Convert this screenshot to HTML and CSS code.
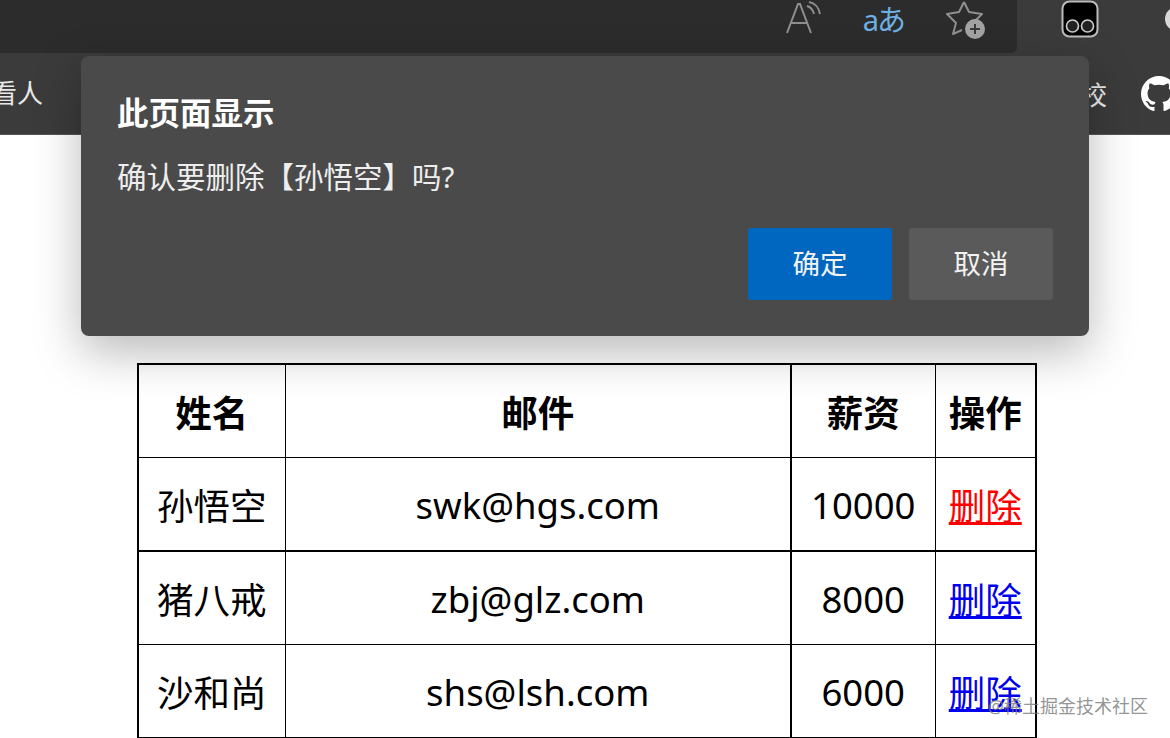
FILE: index.html
```html
<!DOCTYPE html>
<html>
<head>
<title>确认删除</title>
<link rel="stylesheet" href="styles.css">
</head>
<body>

  <div class="browser-top">
    <div class="address-bar">
      <svg class="icon" width="40" height="40" viewBox="0 0 40 40" fill="none" stroke="#8f8f8f" stroke-width="2">
        <path d="M4 33 L15 4 L17 4 L28 33 M8 23 H24"/>
        <path d="M24 6 C28 7 30 10 31 14 M26 2 C32 3 36 8 37 14"/>
      </svg>
      <span class="translate-icon">aあ</span>
      <svg class="icon" width="42" height="42" viewBox="0 0 42 42" fill="none">
        <path d="M20 3 L25 13 L38 15 L30 23 M20 3 L15 13 L3 15 L12 24 L9 35 L18 31" stroke="#8f8f8f" stroke-width="2" stroke-linejoin="round"/>
        <circle cx="31" cy="30" r="10" fill="#a3a3a3"/>
        <path d="M26 30 H36 M31 25 V35" stroke="#3a3a3a" stroke-width="2"/>
      </svg>
    </div>
    <div class="extensions">
      <svg class="icon" width="38" height="38" viewBox="0 0 38 38">
        <rect x="1.5" y="1.5" width="35" height="35" rx="7" fill="#000" stroke="#bdbdbd" stroke-width="2"/>
        <circle cx="11.5" cy="26" r="6" fill="#222" stroke="#d0d0d0" stroke-width="1.6"/>
        <circle cx="26.5" cy="26" r="6" fill="#222" stroke="#d0d0d0" stroke-width="1.6"/>
      </svg>
      <svg class="icon" width="30" height="36" viewBox="0 0 30 36" fill="#d8d8d8">
        <circle cx="18" cy="18" r="12"/>
        <rect x="14" y="2" width="8" height="32" rx="3"/>
        <circle cx="18" cy="18" r="5" fill="#3b3b3b"/>
      </svg>
    </div>
  </div>

  <div class="bookmarks">
    <span class="bookmark-left">看人</span>
    <span class="bookmark-right">校</span>
    <svg class="icon" width="36" height="36" viewBox="0 0 16 16" fill="#fff">
      <path d="M8 0C3.58 0 0 3.58 0 8c0 3.54 2.29 6.53 5.47 7.59.4.07.55-.17.55-.38 0-.19-.01-.82-.01-1.49-2.01.37-2.53-.49-2.69-.94-.09-.23-.48-.94-.82-1.13-.28-.15-.68-.52-.01-.53.63-.01 1.08.58 1.23.82.72 1.21 1.87.87 2.33.66.07-.52.28-.87.51-1.07-1.78-.2-3.64-.89-3.64-3.95 0-.87.31-1.59.82-2.15-.08-.2-.36-1.02.08-2.12 0 0 .67-.21 2.2.82.64-.18 1.32-.27 2-.27s1.36.09 2 .27c1.53-1.04 2.2-.82 2.2-.82.44 1.1.16 1.92.08 2.12.51.56.82 1.27.82 2.15 0 3.07-1.87 3.75-3.65 3.95.29.25.54.73.54 1.48 0 1.07-.01 1.93-.01 2.2 0 .21.15.46.55.38A8.01 8.01 0 0 0 16 8c0-4.42-3.58-8-8-8z"/>
    </svg>
  </div>

  <div class="dialog">
    <div class="dialog-title">此页面显示</div>
    <div class="dialog-msg">确认要删除【孙悟空】吗?</div>
    <div class="dialog-buttons">
      <button class="btn btn-ok">确定</button>
      <button class="btn btn-cancel">取消</button>
    </div>
  </div>

  <table class="staff">
    <tr class="head-row">
      <th>姓名</th>
      <th>邮件</th>
      <th class="col-pay">薪资</th>
      <th>操作</th>
    </tr>
    <tr class="thick-row">
      <td>孙悟空</td>
      <td>swk@hgs.com</td>
      <td class="col-pay">10000</td>
      <td><a href="#" class="hovered">删除</a></td>
    </tr>
    <tr>
      <td>猪八戒</td>
      <td>zbj@glz.com</td>
      <td class="col-pay">8000</td>
      <td><a href="#">删除</a></td>
    </tr>
    <tr>
      <td>沙和尚</td>
      <td>shs@lsh.com</td>
      <td class="col-pay">6000</td>
      <td><a href="#">删除</a></td>
    </tr>
  </table>

  <div class="watermark">@稀土掘金技术社区</div>

</body>
</html>
```

FILE: styles.css
```css
html, body {
  margin: 0;
  height: 738px;
  overflow: hidden;
}

body {
  position: relative;
  background: #fff;
  font-family: "Noto Sans", "Noto Sans CJK SC", sans-serif;
}

.icon {
  display: block;
  flex: none;
}

/* browser chrome */
.browser-top {
  height: 53px;
  display: flex;
  background: #3b3b3b;
}

.address-bar {
  width: 1017px;
  display: flex;
  justify-content: flex-end;
  align-items: center;
  gap: 40px;
  padding: 0 31px 13px 0;
  box-sizing: border-box;
  background: #2c2c2c;
  border-bottom-right-radius: 6px;
}

.translate-icon {
  color: #6fb1e4;
  font-size: 29px;
  letter-spacing: -2px;
  line-height: 38px;
}

.extensions {
  flex: 1;
  display: flex;
  align-items: center;
  gap: 60px;
  padding: 0 0 15px 44px;
  overflow: hidden;
}

.bookmarks {
  height: 82px;
  display: flex;
  align-items: center;
  background: #3b3b3b;
  color: #e8e8e8;
  font-size: 26px;
  overflow: hidden;
  border-bottom: 1px solid #555;
  box-sizing: border-box;
}

.bookmark-left {
  margin: 0 0 4px -9px;
}

.bookmark-right {
  margin-left: auto;
  margin-right: 34px;
}

.bookmarks .icon {
  margin-right: -7px;
}

/* dialog */
.dialog {
  position: absolute;
  left: 81px;
  top: 56px;
  width: 1008px;
  height: 280px;
  box-sizing: border-box;
  padding: 36px 36px 0;
  background: #4a4a4a;
  border-radius: 8px;
  box-shadow: 0 16px 48px rgba(0, 0, 0, 0.28);
  color: #fff;
  z-index: 2;
}

.dialog-title {
  font-size: 31.5px;
  font-weight: bold;
  line-height: 42px;
}

.dialog-msg {
  margin-top: 22px;
  font-size: 29.5px;
  line-height: 42px;
  color: #eee;
}

.dialog-buttons {
  display: flex;
  justify-content: flex-end;
  gap: 17px;
  margin-top: 30px;
}

.btn {
  width: 144px;
  height: 72px;
  padding: 0 0 4px;
  border: 0;
  border-radius: 3px;
  color: #f2f2f2;
  font-family: inherit;
  font-size: 27.5px;
}

.btn-ok {
  background: #0067c0;
}

.btn-cancel {
  background: #5a5a5a;
}

/* table */
.staff {
  margin: 228px 0 0 137px;
  width: 900px;
  table-layout: fixed;
  border-collapse: collapse;
  border: 2px solid #000;
  font-size: 36.5px;
  color: #000;
}

.staff th, .staff td {
  border: 1px solid #000;
  height: 93.5px;
  padding: 2px 0 0;
  text-align: center;
  box-sizing: border-box;
}

.staff .head-row th {
  height: 93px;
  padding-top: 1px;
}

.staff th:nth-child(1) { width: 147px; }
.staff th:nth-child(2) { width: 506px; }
.staff th:nth-child(3) { width: 144px; }

.staff .col-pay {
  border-left: 2px solid #000;
}

.thick-row td {
  border-bottom: 2px solid #000;
}

.staff a {
  color: #0000ee;
}

.staff a.hovered {
  color: #f00;
}

.watermark {
  position: absolute;
  right: 22px;
  top: 694px;
  font-size: 18px;
  line-height: 24px;
  color: rgba(120, 120, 120, 0.8);
}
```
